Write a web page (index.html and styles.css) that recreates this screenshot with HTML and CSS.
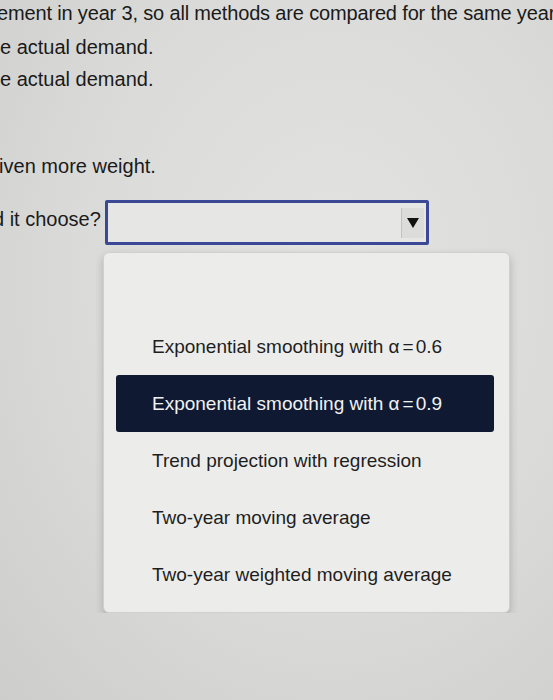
FILE: index.html
```html
<!DOCTYPE html>
<html>
<head>
<meta charset="utf-8">
<link rel="stylesheet" href="styles.css">
</head>
<body>
<div class="page">
  <p class="line line-first">ement in year 3, so all methods are compared for the same year</p>
  <p class="line line-demand">e actual demand.</p>
  <p class="line line-demand2">e actual demand.</p>
  <p class="line line-weight">given more weight.</p>
  <div class="select-row">
    <span class="label">d it choose?</span>
    <div class="select">
      <span class="arrow"><svg width="14" height="12" viewBox="0 0 14 12"><path d="M1 1 L13 1 L7 11 Z" fill="#111"/></svg></span>
    </div>
  </div>
  <div class="dropdown">
    <div class="option">Exponential smoothing with <span class="greek">α</span><span class="eq">=</span>0.6</div>
    <div class="option selected">Exponential smoothing with <span class="greek">α</span><span class="eq">=</span>0.9</div>
    <div class="option">Trend projection with regression</div>
    <div class="option">Two-year moving average</div>
    <div class="option">Two-year weighted moving average</div>
  </div>
</div>
</body>
</html>
```

FILE: styles.css
```css
html, body {
  margin: 0;
  padding: 0;
}
body {
  width: 553px;
  height: 700px;
  overflow: hidden;
  background: radial-gradient(ellipse at 60% 40%, #e3e4e2 0%, #dadbd9 55%, #cdcecc 100%);
  font-family: "Liberation Sans", Arial, sans-serif;
  color: #1a1a1a;
}
.page {
  overflow: hidden;
}
.line {
  margin: 0;
  font-size: 20px;
  line-height: 32px;
  white-space: nowrap;
}
.line-first {
  margin-top: -3px;
  margin-left: -3px;
  margin-bottom: 2px;
  letter-spacing: -0.16px;
}
.line-weight {
  margin-top: 55px;
  margin-left: -12px;
}
.select-row {
  display: flex;
  align-items: center;
  margin-top: 18px;
  margin-left: -7px;
}
.label {
  font-size: 20px;
  width: 112px;
  white-space: nowrap;
  padding-bottom: 6px;
}
.select {
  width: 316px;
  height: 39px;
  border: 3px solid #3a4896;
  border-radius: 2px;
  background: #e6e7e5;
  display: flex;
  align-items: center;
  justify-content: flex-end;
  padding-right: 2px;
}
.arrow {
  width: 22px;
  height: 30px;
  background: #dcdcdb;
  border-left: 1px solid #c2c2c2;
  display: flex;
  align-items: center;
  justify-content: center;
}
.dropdown {
  margin-left: 103px;
  margin-top: 7px;
  width: 407px;
  box-sizing: border-box;
  padding: 65px 15px 9px 12px;
  background: #ecedeb;
  border: 1px solid #d0d1cf;
  border-radius: 6px;
  box-shadow: 0 4px 9px rgba(0, 0, 0, 0.2);
}
.option {
  height: 57px;
  display: flex;
  align-items: center;
  padding-left: 36px;
  font-size: 19px;
  color: #1e1e1e;
  white-space: pre;
}
.option.selected {
  background: #0f1a32;
  color: #f2f2f2;
  border-radius: 3px;
}
.greek {
  font-family: "Liberation Sans", sans-serif;
  margin-right: 3px;
}
.eq {
  margin-right: 2px;
}
```
